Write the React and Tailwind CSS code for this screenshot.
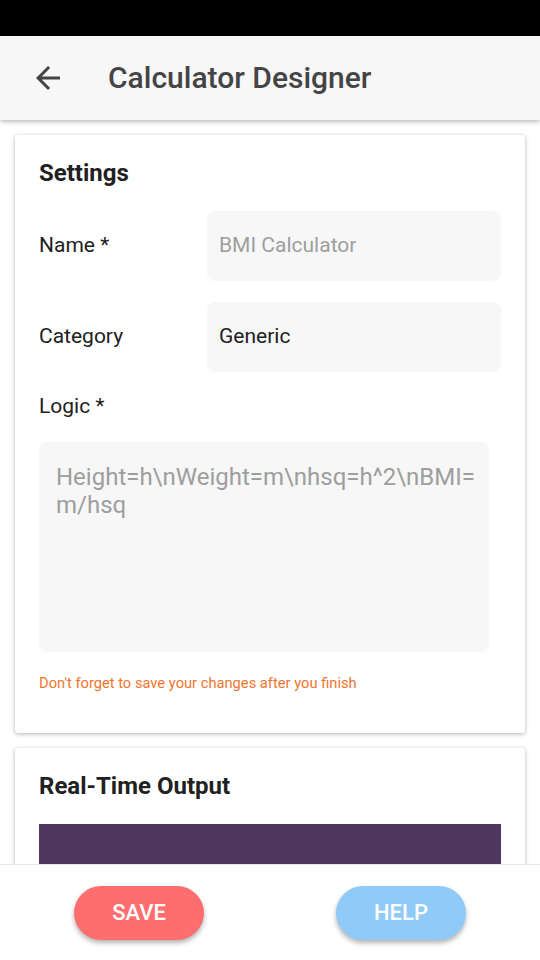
import React from "react";

export default function App() {
  return (
    <div className="w-[540px] h-[960px] flex flex-col bg-white overflow-hidden" style={{ fontFamily: "Roboto, 'Noto Sans', sans-serif" }}>
      <div className="h-9 bg-black shrink-0" />
      <div className="h-[84px] shrink-0 bg-[#f7f7f7] flex items-center shadow-[0_2px_4px_rgba(0,0,0,0.25)] relative z-10">
        <div className="w-[108px] flex items-center pl-[30px]">
          <svg width="36" height="36" viewBox="0 0 24 24" fill="#444444">
            <path d="M20 11H7.83l5.59-5.59L12 4l-8 8 8 8 1.41-1.41L7.83 13H20v-2z" />
          </svg>
        </div>
        <div className="text-[30px] font-medium text-[#444444] leading-none">Calculator Designer</div>
      </div>
      <div className="flex-1 overflow-hidden px-[15px] pt-[15px] flex flex-col gap-[15px]">
        <div className="shrink-0 h-[598px] bg-white rounded-[3px] shadow-[0_1px_4px_rgba(0,0,0,0.3)] px-[24px] pt-[24px] flex flex-col">
          <div className="text-[24px] leading-[28px] font-bold text-[#212121]">Settings</div>
          <div className="flex items-center mt-[24px]">
            <div className="w-[168px] text-[21px] text-[#212121]">Name *</div>
            <div className="flex-1 h-[70px] bg-[#f7f7f7] rounded-[8px] flex items-center px-[12px] text-[21px] text-[#9e9e9e]">BMI Calculator</div>
          </div>
          <div className="flex items-center mt-[21px]">
            <div className="w-[168px] text-[21px] text-[#212121]">Category</div>
            <div className="flex-1 h-[70px] bg-[#f7f7f7] rounded-[8px] flex items-center px-[12px] text-[21px] text-[#212121]">Generic</div>
          </div>
          <div className="mt-[22px] text-[21px] leading-[24px] text-[#212121]">Logic *</div>
          <div className="mt-[24px] mr-[12px] h-[210px] bg-[#f7f7f7] rounded-[8px] px-[17px] pt-[21px] text-[24px] leading-[28px] text-[#9e9e9e]">
            Height=h\nWeight=m\nhsq=h^2\nBMI=<br />m/hsq
          </div>
          <div className="mt-[21px] text-[14.7px] leading-[20px] text-[#f0752e]">Don't forget to save your changes after you finish</div>
        </div>
        <div className="shrink-0 bg-white rounded-[3px] shadow-[0_1px_4px_rgba(0,0,0,0.3)] px-[24px] pt-[24px] flex flex-col">
          <div className="text-[24px] leading-[28px] font-bold text-[#212121]">Real-Time Output</div>
          <div className="mt-[24px] h-[200px] bg-[#503760]" />
        </div>
      </div>
      <div className="h-[96px] shrink-0 bg-white border-t border-[#e6e6e6] flex items-center justify-between px-[74px]">
        <button className="w-[130px] h-[54px] rounded-full bg-[#ff6e6e] text-white text-[22px] font-medium shadow-[0_3px_5px_rgba(0,0,0,0.3)]">SAVE</button>
        <button className="w-[130px] h-[54px] rounded-full bg-[#90caf9] text-white text-[22px] font-medium shadow-[0_3px_5px_rgba(0,0,0,0.3)]">HELP</button>
      </div>
    </div>
  );
}
